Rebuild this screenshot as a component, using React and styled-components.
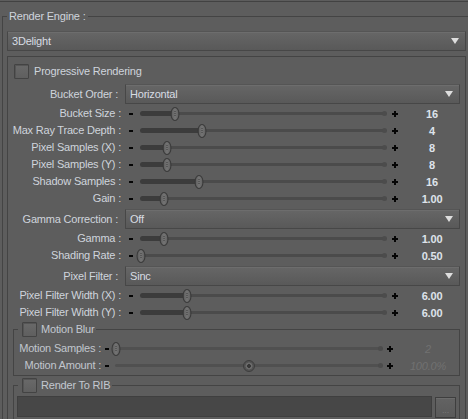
import React from "react";
import styled, { createGlobalStyle } from "styled-components";

const GlobalStyle = createGlobalStyle`
  html, body {
    margin: 0;
    padding: 0;
    background: #5d5d5d;
  }
  body {
    font-family: "Liberation Sans", Arial, sans-serif;
    font-size: 11px;
    letter-spacing: -0.2px;
    color: #cfd4dc;
  }
`;

const Page = styled.div`
  width: 468px;
  height: 419px;
  overflow: hidden;
  box-sizing: border-box;
  padding-top: 1px;
  background: #5d5d5d;
`;

const TopRule = styled.div`
  height: 1px;
  background: #424242;
`;

const Group = styled.fieldset`
  margin: 7px 0 0 2px;
  width: 469px;
  box-sizing: border-box;
  min-width: 0;
  border: 1px solid #444;
  padding: 7px 4px 0 4px;
`;

const Legend = styled.legend`
  padding: 0 2px;
  height: 15px;
  line-height: 15px;
  color: #cfd4dc;
`;

const Box = styled.div`
  margin-top: 5px;
  border: 1px solid #444;
  padding: 7px 5px 0 0;
`;

const SubGroup = styled.fieldset`
  margin: ${(p) => p.$top}px 0 0 5px;
  min-width: 0;
  border: 1px solid #444;
  padding: 3px ${(p) => p.$right}px 1px ${(p) => p.$left}px;
`;

const CheckLegend = styled.legend`
  display: flex;
  align-items: center;
  gap: 4px;
  padding: 0 2px 0 4px;
  height: 15px;
  line-height: 15px;
  color: ${(p) => (p.$dim ? "#c3c8d0" : "#cfd4dc")};
`;

const Check = styled.span`
  width: 15px;
  height: 15px;
  box-sizing: border-box;
  border: 1px solid #434343;
  border-radius: 1px;
  background: linear-gradient(#696969, #5f5f5f);
  box-shadow: inset 1px 1px 0 #555;
`;

const CheckRow = styled.label`
  display: flex;
  align-items: center;
  gap: 5px;
  margin: 0 0 5px 6px;
  height: 15px;
  line-height: 15px;
`;

const DropRow = styled.div`
  display: grid;
  grid-template-columns: 112px 1fr;
  column-gap: 5px;
  margin: 2px 0 1px 0;
`;

const Label = styled.span`
  text-align: right;
  white-space: nowrap;
  line-height: ${(p) => p.$h || 20}px;
  padding-right: ${(p) => p.$pad || 0}px;
  color: ${(p) => (p.$dim ? "#c1c6ce" : "#cfd4dc")};
`;

const Dropdown = styled.div`
  height: 20px;
  box-sizing: border-box;
  display: flex;
  align-items: center;
  justify-content: space-between;
  padding: 0 6px 0 4px;
  border: 1px solid #474747;
  border-top-color: #555;
  border-radius: 1px;
  background: linear-gradient(#666, #595959);
  box-shadow: inset 0 1px 0 #6d6d6d;
  color: #d8dce3;
`;

const Arrow = styled.span`
  width: 0;
  height: 0;
  border-left: 4px solid transparent;
  border-right: 4px solid transparent;
  border-top: 6px solid #dedede;
`;

const SliderRow = styled.div`
  display: grid;
  grid-template-columns: ${(p) => p.$cols};
  align-items: center;
  height: 17px;
`;

const Step = styled.span`
  position: relative;
  display: flex;
  justify-content: center;
  align-items: center;
  height: 17px;
`;

const MinusMark = styled.span`
  width: 4px;
  height: 2px;
  background: #050505;
`;

const PlusMark = styled.span`
  position: relative;
  width: 6px;
  height: 6px;
  &::before,
  &::after {
    content: "";
    position: absolute;
    background: #050505;
  }
  &::before {
    left: 0;
    right: 0;
    top: 2px;
    height: 2px;
  }
  &::after {
    top: 0;
    bottom: 0;
    left: 2px;
    width: 2px;
  }
`;

const Track = styled.div`
  display: flex;
  align-items: center;
  height: 17px;
  padding-left: ${(p) => p.$inset || 0}px;
`;

const Rail = styled.div`
  position: relative;
  flex: 1;
  height: 3px;
  border-radius: 2px;
  background: ${(p) => (p.$dim ? "#505050" : "#4b4b4b")};
  &::after {
    content: "";
    position: absolute;
    right: -1px;
    top: -1px;
    width: 5px;
    height: 5px;
    border-radius: 50%;
    background: #4c4c4c;
  }
`;

const Fill = styled.div`
  position: absolute;
  left: -1px;
  top: -1px;
  height: 5px;
  border-radius: 3px;
  background: #3c3c3c;
`;

const Thumb = styled.div`
  position: absolute;
  top: 50%;
  transform: translate(-50%, -50%);
  width: 9px;
  height: 14px;
  box-sizing: border-box;
  border-radius: 50%;
  border: 1px solid #393939;
  background: linear-gradient(90deg, #5f5f5f, #747474 50%, #626262);
  &::after {
    content: "";
    position: absolute;
    left: 3px;
    top: 3px;
    width: 1px;
    height: 6px;
    background: repeating-linear-gradient(#3c3c3c 0 1px, transparent 1px 2px);
  }
`;

const Knob = styled.div`
  position: absolute;
  top: 50%;
  transform: translate(-50%, -50%);
  width: 12px;
  height: 12px;
  box-sizing: border-box;
  border-radius: 50%;
  border: 1px solid #3d3d3d;
  background: radial-gradient(circle, #383838 0 1.6px, #6c6c6c 2.2px 3.2px, #525252 3.8px);
`;

const Value = styled.span`
  text-align: center;
  font-weight: ${(p) => (p.$dim ? 400 : 700)};
  font-style: ${(p) => (p.$dim ? "italic" : "normal")};
  color: ${(p) => (p.$dim ? "#717171" : "#dee3eb")};
`;

const FileRow = styled.div`
  display: flex;
  gap: 3px;
  margin-left: -1px;
`;

const PathField = styled.div`
  flex: 1;
  height: 21px;
  box-sizing: border-box;
  border: 1px solid #3f3f3f;
  background: #474747;
`;

const BrowseButton = styled.div`
  margin-top: 1px;
  width: 21px;
  height: 21px;
  box-sizing: border-box;
  border: 1px solid #3e3e3e;
  background: linear-gradient(#636363, #5a5a5a);
  box-shadow: inset 0 1px 0 #6c6c6c;
  color: #777;
  font-size: 9px;
  text-align: center;
  line-height: 24px;
`;

const MAIN_COLS = "114px 18px 1fr 18px 56px";
const MOTION_COLS = "84px 10px 1fr 16px 60px";

function Slider({ label, value, pos, dim, knob, cols }) {
  return (
    <SliderRow $cols={cols}>
      <Label $h={17} $pad={1} $dim={dim}>
        {label}
      </Label>
      <Step>
        <MinusMark />
      </Step>
      <Track $inset={knob ? 3 : 1}>
        <Rail $dim={dim}>
          {!dim && <Fill style={{ width: `calc(${pos * 100}% + 1px)` }} />}
          {knob ? (
            <Knob style={{ left: `${pos * 100}%` }} />
          ) : (
            <Thumb style={{ left: `${pos * 100}%` }} />
          )}
        </Rail>
      </Track>
      <Step>
        <PlusMark />
      </Step>
      <Value $dim={dim}>{value}</Value>
    </SliderRow>
  );
}

function Select({ label, value }) {
  return (
    <DropRow>
      <Label $pad={2}>{label}</Label>
      <Dropdown>
        <span>{value}</span>
        <Arrow />
      </Dropdown>
    </DropRow>
  );
}

const mainSliders = [
  { label: "Bucket Size :", value: "16", pos: 0.139 },
  { label: "Max Ray Trace Depth :", value: "4", pos: 0.25 },
  { label: "Pixel Samples (X) :", value: "8", pos: 0.107 },
  { label: "Pixel Samples (Y) :", value: "8", pos: 0.107 },
  { label: "Shadow Samples :", value: "16", pos: 0.238 },
  { label: "Gain :", value: "1.00", pos: 0.094 },
];

const gammaSliders = [
  { label: "Gamma :", value: "1.00", pos: 0.094 },
  { label: "Shading Rate :", value: "0.50", pos: 0 },
];

const filterSliders = [
  { label: "Pixel Filter Width (X) :", value: "6.00", pos: 0.189 },
  { label: "Pixel Filter Width (Y) :", value: "6.00", pos: 0.189 },
];

function MainSlider(props) {
  return <Slider {...props} cols={MAIN_COLS} />;
}

export default function App() {
  return (
    <Page>
      <GlobalStyle />
      <TopRule />
      <Group>
        <Legend>Render Engine :</Legend>
        <Dropdown>
          <span>3Delight</span>
          <Arrow />
        </Dropdown>
        <Box>
          <CheckRow>
            <Check />
            <span>Progressive Rendering</span>
          </CheckRow>
          <Select label="Bucket Order :" value="Horizontal" />
          {mainSliders.map((s) => (
            <MainSlider key={s.label} {...s} />
          ))}
          <Select label="Gamma Correction :" value="Off" />
          {gammaSliders.map((s) => (
            <MainSlider key={s.label} {...s} />
          ))}
          <Select label="Pixel Filter :" value="Sinc" />
          {filterSliders.map((s) => (
            <MainSlider key={s.label} {...s} />
          ))}
          <SubGroup $top={1} $left={4} $right={1}>
            <CheckLegend $dim>
              <Check />
              <span>Motion Blur</span>
            </CheckLegend>
            <Slider
              label="Motion Samples :"
              value="2"
              pos={0.01}
              dim
              cols={MOTION_COLS}
            />
            <Slider
              label="Motion Amount :"
              value="100.0%"
              pos={0.5}
              dim
              knob
              cols={MOTION_COLS}
            />
          </SubGroup>
          <SubGroup $top={2} $left={4} $right={3}>
            <CheckLegend $dim>
              <Check />
              <span>Render To RIB</span>
            </CheckLegend>
            <FileRow>
              <PathField />
              <BrowseButton>...</BrowseButton>
            </FileRow>
          </SubGroup>
        </Box>
      </Group>
    </Page>
  );
}
